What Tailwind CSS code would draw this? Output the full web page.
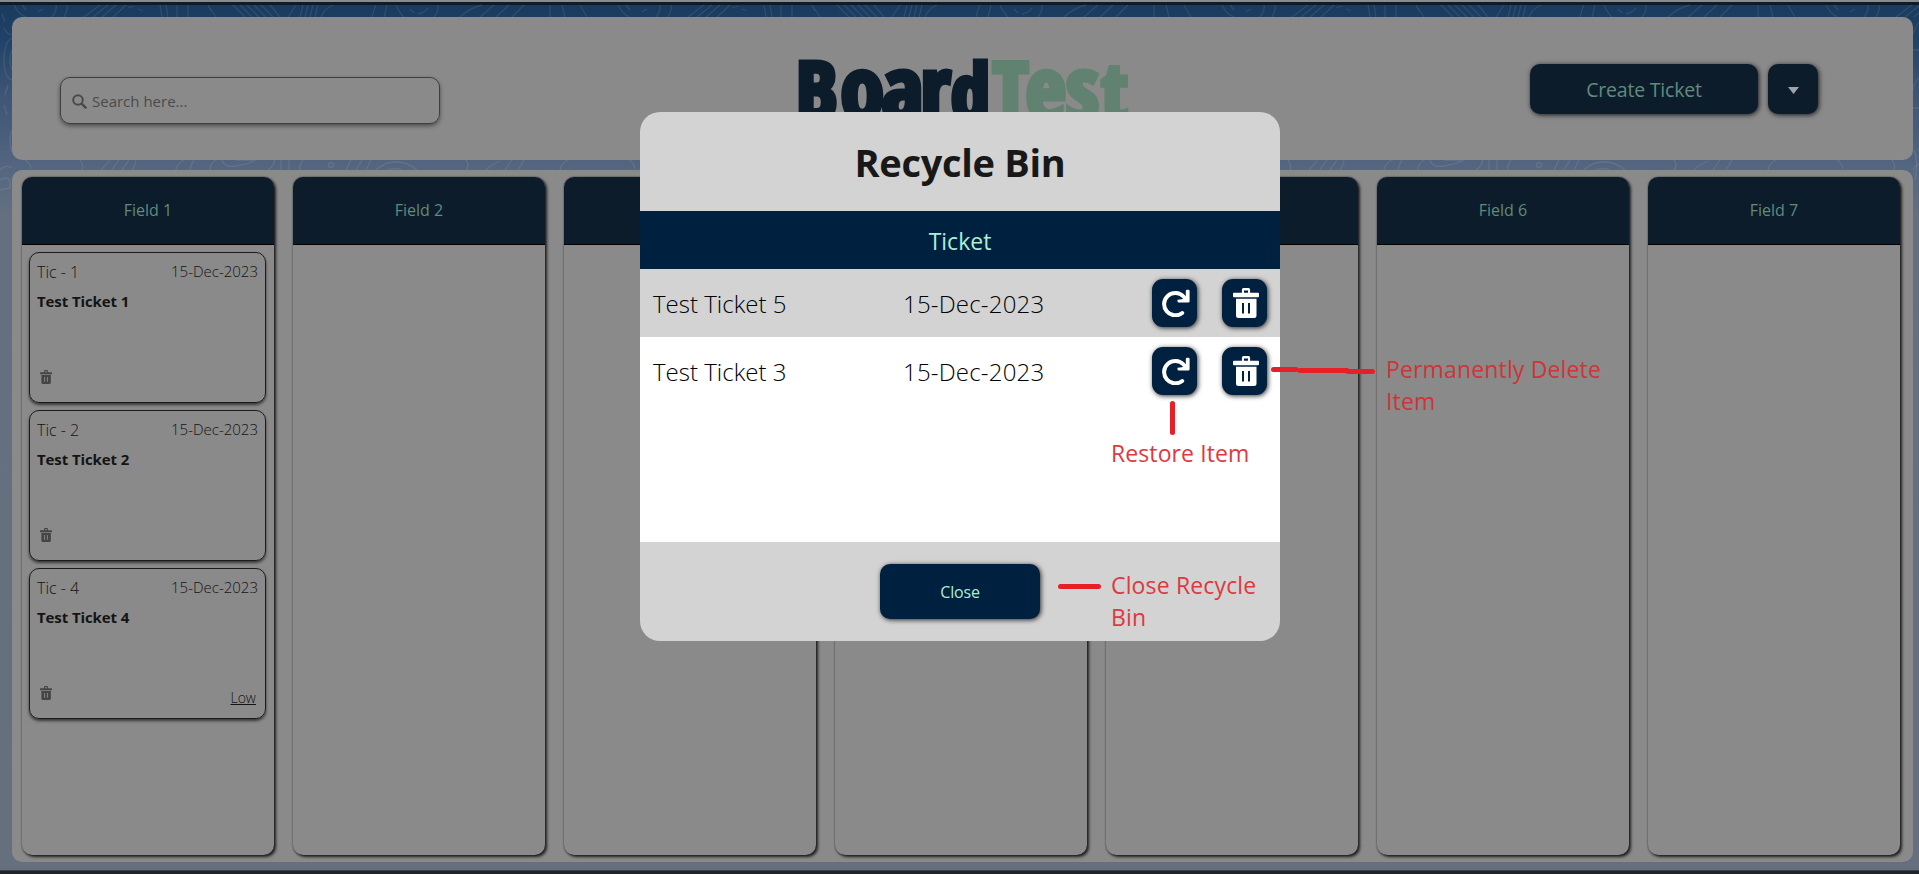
<!DOCTYPE html>
<html lang="en">
<head>
<meta charset="utf-8">
<title>BoardTest</title>
<script src="https://cdn.jsdelivr.net/npm/@tailwindcss/browser@4"></script>
</head>
<body class="h-[874px] w-[1919px] overflow-hidden bg-[#222326] font-['Open_Sans','Noto_Sans',sans-serif]">
<svg class="hidden">
  <symbol id="trash" viewBox="0 0 26 30"><path fill="currentColor" fill-rule="evenodd" d="M10.5 0h5a1.6 1.6 0 0 1 1.6 1.6v3.1h7.9a1 1 0 0 1 1 1v2.6a1 1 0 0 1-1 1H1a1 1 0 0 1-1-1V5.700a1 1 0 0 1 1-1h7.900V1.600A1.600 1.600 0 0 1 10.500 0zM11 2.400v2.300h4V2.400zM3 10.800h20.500v16.700a2.500 2.500 0 0 1-2.500 2.500H5.500A2.500 2.500 0 0 1 3 27.500zM9 15v10.400h2V15zM15 15v10.400h2V15z"/></symbol>
  <symbol id="restore" viewBox="0 0 28 28"><path fill="none" stroke="currentColor" stroke-width="4" stroke-linecap="round" d="M20.200 24A11.200 11.200 0 1 1 21.500 7.500"/><path fill="currentColor" d="M27.600 2v10.200a1.300 1.300 0 0 1-1.300 1.300H16.800a1.300 1.300 0 0 1-1.300-1.300v-1.500l4.500-.4 3.800-3.500V2a1.300 1.300 0 0 1 1.300-1.300h1.200A1.300 1.300 0 0 1 27.600 2z"/></symbol>
  <symbol id="waves" viewBox="0 0 600 200" overflow="visible"><g fill="none" stroke="#fff" stroke-opacity=".09" stroke-width="1.300">
    <path d="M14 5q4 9 12 12M22 5l4 5M38 12l5-3M52 17q5-6 4-12M64 17q4-7 3-12M84 17l16-12M93 17l15-12M102 17l14-12M113 17l13-12M128 8l6-2M138 9l5 2M160 5l2 12M166 5l2 12M177 5v12M188 5v12M208 5l3 6M216 17l-8-12M233 5l12 12M240 5l12 12M247 5l12 12M254 5l12 12M261 5l12 12M270 5l10 12M288 17l8-12M300 17l3-12M305 17l3-12M310 17l3-12M315 17l3-12M321 17q3-8 12-12M372 17q2-8 4-12M384 17l3-12M396 5q4 9 8 12M410 9l4 4M418 14q8-2 10-6M434 17q5-6 4-12M460 17q10-9 22-12M480 17l14-12M496 17l13-12M512 17l12-12M550 5v12M562 5l3 12M580 5l7 12"/>
    <path d="M25 160q6 4 6 9M80 160q4 5 2 10M101 170q4-6 9-9M112 170l7-10M122 170l7-10M132 170q3-4 4-10M176 170q1-7 8-10M190 170q1-6 4-10M210 170q0-7 6-10M222 160q2 8 14 6t20-6M236 160h18M268 170q5-3 7-10M281 160v10M289 160v10M300 170q-1-5 3-10M346 170l5-10M356 170l6-10M366 170l5-10M376 170q8-8 20-8t21 8M388 170q7-3 14 0M466 160q4 5 0 10M486 170q6-6 14-9M505 170l7-10M518 170l6-10M560 170q1-7 8-10"/>
    <circle cx="331" cy="165" r="2.500"/>
  </g></symbol>
</svg>

<div class="relative flex h-full flex-col">
  <div class="h-[2px] shrink-0 bg-[#8b8b8b]"></div>
  <div class="h-[3px] shrink-0 bg-[#0d1c2a]"></div>
  <div class="relative flex h-[865px] shrink-0 flex-col gap-[10px] bg-linear-[180deg,#1a3b5d_0px,#204268_35px,#3c5474_85px,#536580_160px,#647080_210px,#656f7e_865px] px-3 pt-3 pr-1.5 pb-2">
    <svg class="absolute left-0 top-[-5px] h-[874px] w-full">
      <use href="#waves" width="600" height="200"/><use href="#waves" x="604" width="600" height="200"/><use href="#waves" x="1208" width="600" height="200"/><use href="#waves" x="1812" width="600" height="200"/>
      <g fill="none" stroke="#fff" stroke-opacity=".09" stroke-width="1.300"><path d="M2 14l3 8M4 28q4 8 8 6M12 38q-8 4-8 22t8 20M12 50q-4 10 0 20M8 85l-3 10M4 105l3 10M12 130q-4 10 0 22M0 170q6-6 12-2M0 180q5-4 10 0v8l-10 2M1919 22q-4 6-6 12M1913 50h6M1919 78q-5 4-6 12M1913 108h6M1914 150q5 12 1 30"/></g>
    </svg>

    <header class="relative flex h-[143px] shrink-0 items-center justify-between rounded-[10px] bg-[#8a8a8a] pr-[95px] pl-12">
      <div class="mt-6 flex h-[47px] w-[380px] items-center gap-[5px] rounded-[10px] border border-[#3e3e3e] pl-[11px] text-[#4a4a4a] shadow-[0_2px_4px_rgba(0,0,0,.45)]">
        <svg class="mt-0.5 size-[15px]" viewBox="0 0 15 15" fill="none" stroke="currentColor"><circle cx="6" cy="6" r="4.800" stroke-width="2"/><path d="M9.600 9.600l4.700 4.700" stroke-width="2.400"/></svg>
        <span class="pt-0.5 text-[15px]">Search here...</span>
      </div>
      <svg class="absolute top-8 left-[778px] h-[96px] w-[350px] font-['Open_Sans_Condensed','Open_Sans',sans-serif] font-bold" viewBox="790 49 350 96">
        <text y="119.500" stroke-width="5" font-size="81"><tspan fill="#0c1c2b" stroke="#0c1c2b"><tspan x="796">B</tspan><tspan x="840.500" font-size="88">o</tspan><tspan x="882" font-size="88">a</tspan><tspan x="920.500" font-size="88">r</tspan><tspan x="951" font-size="78">d</tspan></tspan><tspan fill="#618270" stroke="#618270"><tspan x="993">T</tspan><tspan x="1025.500" font-size="88">e</tspan><tspan x="1066" font-size="88">s</tspan><tspan x="1101.500" font-size="80">t</tspan></tspan></text>
      </svg>
      <div class="flex gap-[10px] text-[#618b7b]">
        <div class="flex h-[50px] w-[228px] items-center justify-center rounded-[10px] bg-[#0c1c2b] pt-0.5 text-[19.5px] tracking-[-0.2px] shadow-[1px_1px_5px_rgba(0,0,0,.8)]">Create Ticket</div>
        <div class="flex h-[50px] w-[50px] items-center justify-center rounded-[10px] bg-[#0c1c2b] shadow-[1px_1px_5px_rgba(0,0,0,.8)]"><svg class="mt-1 h-[7px] w-[11px]" viewBox="0 0 11 7"><path fill="#a0a4a8" d="M0 0h11L5.500 7z"/></svg></div>
      </div>
    </header>

    <main id="board" class="relative flex h-[692px] shrink-0 gap-[19px] rounded-[10px] bg-[#8a8a8a] px-[10px] py-[7px]"></main>
  </div>
  <div class="h-px bg-[#3c4148]"></div>

  <section class="absolute top-[112px] left-[640px] flex h-[529px] w-[640px] flex-col overflow-hidden rounded-[20px] bg-[#d3d3d3]">
    <h1 class="flex h-[99px] items-center justify-center pt-px text-[38px] font-bold tracking-[-0.3px] text-[#181818]">Recycle Bin</h1>
    <div class="flex h-[58px] items-center justify-center bg-[#00203f] pt-[3px] text-[23px] text-[#aaf0d5]">Ticket</div>
    <div id="bin" class="h-[273px] bg-white"></div>
    <footer class="flex flex-1 justify-center pt-[22px]">
      <div class="flex h-[55px] w-[160px] items-center justify-center rounded-[10px] bg-[#00203f] pt-px text-base tracking-[-0.2px] text-[#aaf0d5] shadow-[1px_1px_5px_rgba(0,0,0,.8)]">Close</div>
    </footer>
  </section>

  <!-- red callouts -->
  <svg class="absolute inset-0 h-full w-full" fill="none" stroke="#e71f27" stroke-width="5" stroke-linecap="round"><path d="M1273.500 369.500H1296M1300 370.500H1347M1348 371.500H1372.500M1172.500 403.500V432.500M1060.500 586.500H1098.500"/></svg>
  <p class="absolute top-[437px] left-[1111px] text-[23px] leading-8 tracking-[0.1px] text-[#de393e]">Restore Item</p>
  <p class="absolute top-[353px] left-[1386px] text-[23px] leading-8 tracking-[0.15px] text-[#cf3438]">Permanently Delete<br>Item</p>
  <p class="absolute top-[569px] left-[1111px] text-[23px] leading-8 tracking-[0.15px] text-[#de393e]">Close Recycle<br>Bin</p>
</div>

<script>
const tickets = [[1, ''], [2, ''], [4, 'Low']];
const card = ([n, priority]) => `
  <article class="flex h-[150.5px] shrink-0 flex-col rounded-[10px] border border-[#1c1c1c] px-[7px] text-[#141414] shadow-[0_2px_3px_rgba(0,0,0,.6)]">
    <div class="mt-[6px] flex h-6 items-center justify-between font-[350]"><span class="pt-0.5 text-base">Tic - ${n}</span><span class="text-[15px]">15-Dec-2023</span></div>
    <div class="mt-[6px] text-[15px] leading-6 font-bold tracking-[-0.1px]">Test Ticket ${n}</div>
    <div class="mt-auto mb-[6px] flex h-[26px] items-start justify-between pr-[2px] pl-[3px]"><svg class="h-[14px] w-[12px] text-[#454545]"><use href="#trash"/></svg><span class="mt-[2px] text-sm font-[350] underline">${priority}</span></div>
  </article>`;
board.innerHTML = [1, 2, 3, 4, 5, 6, 7].map(i => `
  <section class="h-[678px] w-[252px] shrink-0 overflow-hidden rounded-[10px] shadow-[2px_2px_3px_rgba(0,0,0,.75),0_0_2px_rgba(0,0,0,.6)]">
    <h2 class="flex h-[68px] items-center justify-center border-b border-black bg-[#0c1c2b] pb-0.5 text-base text-[#618b7b]">Field ${i}</h2>
    <div class="flex flex-col gap-[7.5px] pt-[7px] pr-2 pl-[7px]">${i === 1 ? tickets.map(card).join('') : ''}</div>
  </section>`).join('');
bin.innerHTML = [5, 3].map(n => `
  <div class="flex h-[68px] items-center bg-[#d3d3d3] pl-[13px] text-[24px] font-[350] text-black last:bg-white">
    <span class="w-[250px] pt-0.5">Test Ticket ${n}</span><span class="w-[249px] pt-0.5 tracking-[0.2px]">15-Dec-2023</span>
    <div class="flex gap-[25px] text-white">
      <span class="flex h-12 w-[45px] items-center justify-center rounded-[11px] bg-[#00203f] shadow-[1px_1px_5px_rgba(0,0,0,.8)]"><svg class="ml-0.5 size-7"><use href="#restore"/></svg></span>
      <span class="flex h-12 w-[45px] items-center justify-center rounded-[11px] bg-[#00203f] shadow-[1px_1px_5px_rgba(0,0,0,.8)]"><svg class="ml-[3px] h-[30px] w-[26px]"><use href="#trash"/></svg></span>
    </div>
  </div>`).join('');
</script>
</body>
</html>
